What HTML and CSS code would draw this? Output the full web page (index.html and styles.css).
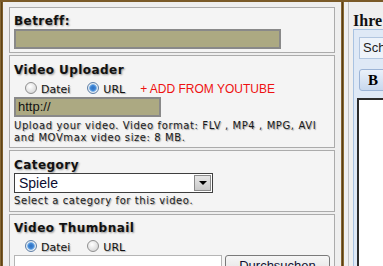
FILE: index.html
```html
<!DOCTYPE html>
<html lang="de">
<head>
<meta charset="utf-8">
<title>Video hochladen</title>
<link rel="stylesheet" href="styles.css">
</head>
<body>
<div class="page">
  <div class="edge"></div>
  <div class="left">
    <div class="box b1">
      <div class="h">Betreff:</div>
      <div class="field f-subject"></div>
    </div>
    <div class="box b2">
      <div class="h">Video Uploader</div>
      <div class="radios">
        <span class="radio"></span><span class="rl">Datei</span>
        <span class="radio on"></span><span class="rl">URL</span>
        <span class="yt">+ ADD FROM YOUTUBE</span>
      </div>
      <div class="field f-url">http://</div>
      <p class="help">Upload your video. Video format: FLV , MP4 , MPG, AVI and MOVmax video size: 8 MB.</p>
    </div>
    <div class="box b3">
      <div class="h">Category</div>
      <div class="select"><span class="sel-text">Spiele</span><span class="arrow"><span class="tri"></span></span></div>
      <p class="help">Select a category for this video.</p>
    </div>
    <div class="box b4">
      <div class="h">Video Thumbnail</div>
      <div class="radios">
        <span class="radio on"></span><span class="rl">Datei</span>
        <span class="radio"></span><span class="rl">URL</span>
      </div>
      <div class="filerow">
        <div class="filetext"></div>
        <div class="btn">Durchsuchen</div>
      </div>
    </div>
  </div>
  <div class="divider"></div>
  <div class="right">
    <div class="rinner">
      <div class="rh">Ihre</div>
      <div class="editor">
        <div class="fontbox">Schriftart</div>
        <div class="bbtn">B</div>
        <div class="area"></div>
      </div>
    </div>
  </div>
</div>
</body>
</html>
```

FILE: styles.css
```css
html, body {
  margin: 0;
  padding: 0;
}
body {
  width: 383px;
  height: 266px;
  overflow: hidden;
  background: #efefef;
  font-family: "DejaVu Sans", Verdana, sans-serif;
}
.page {
  display: flex;
  height: 264px;
  border-top: 2px solid #7a5a28;
}
.edge {
  width: 3px;
  flex: none;
  background: linear-gradient(to right, #9c7b42, #5e4216, #8a6a34);
}
.left {
  width: 326px;
  flex: none;
  padding: 5px 6px 0 6px;
  background: #eeeeee;
  display: flex;
  flex-direction: column;
  gap: 2px;
}
.box {
  border: 1px solid #ababab;
  background: #f4f4f4;
  padding: 6px 4px 4px 4px;
}
.b1 { padding-top: 5px; padding-bottom: 3px; }
.b2 { padding-bottom: 3px; }
.b4 { padding-top: 5px; padding-bottom: 0; height: 60px; }
.h {
  font-weight: bold;
  font-size: 12px;
  line-height: 16px;
  letter-spacing: 0.45px;
  color: #111;
  text-shadow: 1px 1px 2px rgba(0,0,0,0.4);
}
.field {
  box-sizing: border-box;
  height: 20px;
  background: #aca982;
  border: 2px solid #898989;
  font-family: "Liberation Sans", Arial, sans-serif;
  font-size: 13px;
  line-height: 16px;
  color: #111;
  padding-left: 2px;
}
.f-subject { width: 267px; }
.f-url { width: 147px; }
.radios {
  display: flex;
  align-items: flex-start;
  height: 19px;
}
.radio {
  box-sizing: border-box;
  width: 12px;
  height: 12px;
  margin-top: 4px;
  margin-left: 11px;
  border-radius: 50%;
  border: 1px solid #8f8f8f;
  background: radial-gradient(circle at 40% 35%, #ffffff, #dcdcdc 70%, #c8c8c8);
}
.radio + .rl { margin-left: 4px; }
.rl + .radio { margin-left: 17px; }
.radio.on {
  background: radial-gradient(circle, #2d6fc0 0, #3f86d6 2.5px, #8cbcea 3.6px, #e8eef5 4.2px, #d0d6dd 100%);
  border-color: #5e7fa6;
}
.rl {
  font-size: 11px;
  line-height: 13px;
  margin-top: 5px;
  color: #111;
  text-shadow: 1px 1px 1px rgba(0,0,0,0.3);
}
.yt {
  font-family: "Liberation Sans", Arial, sans-serif;
  font-size: 12px;
  line-height: 14px;
  margin-top: 4px;
  margin-left: 15px;
  color: #ee1111;
}
.help {
  margin: 3px 0 0 0;
  font-size: 10px;
  line-height: 12px;
  letter-spacing: 0.6px;
  color: #1a1a1a;
  text-shadow: 1px 1px 1px rgba(0,0,0,0.35);
}
.b3 .help { margin-top: 2px; }
.select {
  box-sizing: border-box;
  width: 199px;
  height: 20px;
  border: 1px solid #3f3f3f;
  background: #fff;
  display: flex;
  align-items: center;
  justify-content: space-between;
}
.sel-text {
  font-family: "Liberation Sans", Arial, sans-serif;
  font-size: 14px;
  color: #0c0c30;
  padding-left: 4px;
}
.arrow {
  box-sizing: border-box;
  width: 17px;
  height: 16px;
  margin-right: 1px;
  border: 1px solid #8a8a8a;
  background: linear-gradient(#e6e6e6, #c9c9c9);
  display: flex;
  align-items: center;
  justify-content: center;
}
.tri {
  width: 0;
  height: 0;
  border-left: 4px solid transparent;
  border-right: 4px solid transparent;
  border-top: 4px solid #000;
}
.filerow {
  display: flex;
  gap: 3px;
  align-items: flex-start;
}
.filetext {
  box-sizing: border-box;
  width: 208px;
  height: 22px;
  background: #fff;
  border: 1px solid #b5b5b5;
}
.btn {
  box-sizing: border-box;
  width: 105px;
  height: 24px;
  border: 1px solid #7a7a7a;
  border-radius: 3px;
  background: linear-gradient(#f6f6f6, #dedede);
  font-family: "Liberation Sans", Arial, sans-serif;
  font-size: 13px;
  line-height: 20px;
  text-align: center;
  color: #101030;
}
.divider {
  width: 3px;
  flex: none;
  background: linear-gradient(to right, #9c7b42, #5a3e14, #a0803f);
}
.right {
  flex: 1;
  overflow: hidden;
  padding-left: 4px;
  background: #efefef;
}
.rinner {
  border-left: 1px solid #c4c4c4;
  padding: 10px 0 0 4px;
  height: 254px;
  width: 200px;
}
.rh {
  font-family: "Liberation Serif", "Times New Roman", serif;
  font-weight: bold;
  font-size: 16px;
  line-height: 17px;
  color: #111;
}
.editor {
  width: 200px;
  height: 240px;
  border: 1px solid #a9c3e2;
  background: #dfe9f6;
  padding: 7px 0 0 3px;
}
.fontbox {
  box-sizing: border-box;
  margin-left: 2px;
  width: 100px;
  height: 22px;
  border: 1px solid #b2c6e0;
  background: #eef3fa;
  font-family: "Liberation Sans", Arial, sans-serif;
  font-size: 13px;
  line-height: 20px;
  padding-left: 3px;
  color: #222;
}
.bbtn {
  box-sizing: border-box;
  margin: 10px 0 0 2px;
  width: 40px;
  height: 22px;
  border: 1px solid #9cb4d6;
  border-radius: 3px;
  background: linear-gradient(#eaf1fa, #c8d8ee);
  font-family: "Liberation Serif", "Times New Roman", serif;
  font-weight: bold;
  font-size: 15px;
  line-height: 20px;
  padding-left: 8px;
  color: #000;
}
.area {
  margin-top: 7px;
  height: 200px;
  background: #fff;
  border: 2px solid #2c2c2c;
}
```
